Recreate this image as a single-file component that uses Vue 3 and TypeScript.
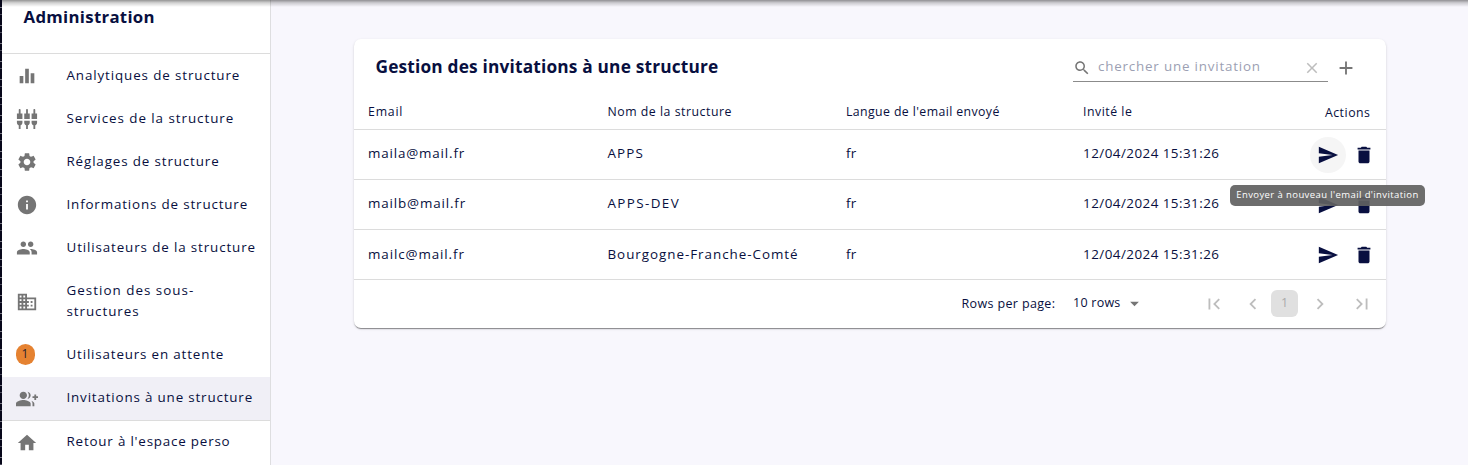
<script setup lang="ts">
interface Label { text: string; spacing: number }
interface MenuItem { icon: string; lines: Label[]; active?: boolean; badge?: number; divided?: boolean }
interface Row { email: Label; structure: Label; lang: string; date: string; hovered?: boolean }

const icons: Record<string, string> = {
  chart: 'M10 20h4V4h-4v16zm-6 0h4v-8H4v8zM16 9v11h4V9h-4z',
  services: 'M5 2c0-.55-.45-1-1-1s-1 .45-1 1v4H1v6h6V6H5V2zm4 14c0 1.3.84 2.4 2 2.82V23h2v-4.18c1.16-.41 2-1.51 2-2.82v-2H9v2zm-8 0c0 1.3.84 2.4 2 2.82V23h2v-4.18C6.16 18.4 7 17.3 7 16v-2H1v2zM21 6V2c0-.55-.45-1-1-1s-1 .45-1 1v4h-2v6h6V6h-2zm-8-4c0-.55-.45-1-1-1s-1 .45-1 1v4H9v6h6V6h-2V2zm4 14c0 1.3.84 2.4 2 2.82V23h2v-4.18c1.16-.41 2-1.51 2-2.82v-2h-6v2z',
  settings: 'M19.14 12.94c.04-.3.06-.61.06-.94 0-.32-.02-.64-.07-.94l2.03-1.58c.18-.14.23-.41.12-.61l-1.92-3.32c-.12-.22-.37-.29-.59-.22l-2.39.96c-.5-.38-1.03-.7-1.62-.94l-.36-2.54c-.04-.24-.24-.41-.48-.41h-3.84c-.24 0-.43.17-.47.41l-.36 2.54c-.59.24-1.13.57-1.62.94l-2.39-.96c-.22-.08-.47 0-.59.22L2.74 8.87c-.12.21-.08.47.12.61l2.03 1.58c-.05.3-.09.63-.09.94s.02.64.07.94l-2.03 1.58c-.18.14-.23.41-.12.61l1.92 3.32c.12.22.37.29.59.22l2.39-.96c.5.38 1.03.7 1.62.94l.36 2.54c.05.24.24.41.48.41h3.84c.24 0 .44-.17.47-.41l.36-2.54c.59-.24 1.13-.56 1.62-.94l2.39.96c.22.08.47 0 .59-.22l1.92-3.32c.12-.22.07-.47-.12-.61l-2.01-1.58zM12 15.6c-1.98 0-3.6-1.62-3.6-3.6s1.62-3.6 3.6-3.6 3.6 1.62 3.6 3.6-1.62 3.6-3.6 3.6z',
  info: 'M12 2C6.48 2 2 6.48 2 12s4.48 10 10 10 10-4.48 10-10S17.52 2 12 2zm1 15h-2v-6h2v6zm0-8h-2V7h2v2z',
  people: 'M16 11c1.66 0 2.99-1.34 2.99-3S17.66 5 16 5c-1.66 0-3 1.34-3 3s1.34 3 3 3zm-8 0c1.66 0 2.99-1.34 2.99-3S9.66 5 8 5C6.34 5 5 6.34 5 8s1.34 3 3 3zm0 2c-2.33 0-7 1.17-7 3.5V19h14v-2.5c0-2.33-4.67-3.5-7-3.5zm8 0c-.29 0-.62.02-.97.05 1.16.84 1.97 1.97 1.97 3.45V19h6v-2.5c0-2.33-4.67-3.5-7-3.5z',
  business: 'M12 7V3H2v18h20V7H12zM6 19H4v-2h2v2zm0-4H4v-2h2v2zm0-4H4V9h2v2zm0-4H4V5h2v2zm4 12H8v-2h2v2zm0-4H8v-2h2v2zm0-4H8V9h2v2zm0-4H8V5h2v2zm10 12h-8v-2h2v-2h-2v-2h2v-2h-2V9h8v10zm-2-8h-2v2h2v-2zm0 4h-2v2h2v-2z',
  groupAdd: 'M22 9V7h-2v2h-2v2h2v2h2v-2h2V9zM8 12c2.21 0 4-1.79 4-4s-1.79-4-4-4-4 1.79-4 4 1.79 4 4 4zm0 1c-2.67 0-8 1.34-8 4v3h16v-3c0-2.66-5.33-4-8-4zM12.51 4.05C13.43 5.11 14 6.49 14 8s-.57 2.89-1.49 3.95C14.47 11.7 16 10.04 16 8s-1.53-3.7-3.49-3.95zM16.53 13.83C17.42 14.66 18 15.7 18 17v3h2v-3c0-1.45-1.59-2.51-3.47-3.17z',
  home: 'M10 20v-6h4v6h5v-8h3L12 3 2 12h3v8z',
  search: 'M15.5 14h-.79l-.28-.27C15.41 12.59 16 11.11 16 9.5 16 5.91 13.09 3 9.5 3S3 5.91 3 9.5 5.91 16 9.5 16c1.61 0 3.09-.59 4.23-1.57l.27.28v.79l5 4.99L20.49 19l-4.99-5zm-6 0C7.01 14 5 11.99 5 9.5S7.01 5 9.5 5 14 7.01 14 9.5 11.99 14 9.5 14z',
  clear: 'M19 6.41L17.59 5 12 10.59 6.41 5 5 6.41 10.59 12 5 17.59 6.41 19 12 13.41 17.59 19 19 17.59 13.41 12z',
  add: 'M19 13h-6v6h-2v-6H5v-2h6V5h2v6h6v2z',
  send: 'M2.01 21L23 12 2.01 3 2 10l15 2-15 2z',
  trash: 'M6 19c0 1.1.9 2 2 2h8c1.1 0 2-.9 2-2V7H6v12zM19 4h-3.5l-1-1h-5l-1 1H5v2h14V4z',
  drop: 'M7 10l5 5 5-5z',
  first: 'M18.41 16.59L13.82 12l4.59-4.59L17 6l-6 6 6 6zM6 6h2v12H6z',
  prev: 'M15.41 7.41L14 6l-6 6 6 6 1.41-1.41L10.83 12z',
  next: 'M10 6L8.59 7.41 13.17 12l-4.58 4.59L10 18l6-6z',
  last: 'M5.59 7.41L10.18 12l-4.59 4.59L7 18l6-6-6-6zM16 6h2v12h-2z',
}

const menu: MenuItem[] = [
  { icon: 'chart', lines: [{ text: 'Analytiques de structure', spacing: 0.88 }] },
  { icon: 'services', lines: [{ text: 'Services de la structure', spacing: 0.95 }] },
  { icon: 'settings', lines: [{ text: 'Réglages de structure', spacing: 0.86 }] },
  { icon: 'info', lines: [{ text: 'Informations de structure', spacing: 0.84 }] },
  { icon: 'people', lines: [{ text: 'Utilisateurs de la structure', spacing: 0.87 }] },
  { icon: 'business', lines: [{ text: 'Gestion des sous-', spacing: 1.02 }, { text: 'structures', spacing: 0.94 }] },
  { icon: '', badge: 1, lines: [{ text: 'Utilisateurs en attente', spacing: 0.83 }] },
  { icon: 'groupAdd', active: true, lines: [{ text: 'Invitations à une structure', spacing: 0.83 }] },
  { icon: 'home', divided: true, lines: [{ text: "Retour à l'espace perso", spacing: 0.8 }] },
]

const rows: Row[] = [
  { email: { text: 'maila@mail.fr', spacing: 0.84 }, structure: { text: 'APPS', spacing: 1.1 }, lang: 'fr', date: '12/04/2024 15:31:26', hovered: true },
  { email: { text: 'mailb@mail.fr', spacing: 0.86 }, structure: { text: 'APPS-DEV', spacing: 1.4 }, lang: 'fr', date: '12/04/2024 15:31:26' },
  { email: { text: 'mailc@mail.fr', spacing: 0.9 }, structure: { text: 'Bourgogne-Franche-Comté', spacing: 0.97 }, lang: 'fr', date: '12/04/2024 15:31:26' },
]
</script>

<template>
  <div class="page">
    <div class="edge"></div>
    <aside class="sidebar">
      <h2><span>Administration</span></h2>
      <nav>
        <a v-for="item in menu" :key="item.lines[0].text" class="item" :class="{ active: item.active, divided: item.divided, tall: item.lines.length > 1 }">
          <span class="slot">
            <span v-if="item.badge" class="badge">{{ item.badge }}</span>
            <svg v-else class="icon" viewBox="0 0 24 24"><path :d="icons[item.icon]" /></svg>
          </span>
          <span class="label">
            <span v-for="l in item.lines" :key="l.text" class="line" :style="{ letterSpacing: l.spacing + 'px' }">{{ l.text }}</span>
          </span>
        </a>
      </nav>
    </aside>
    <main>
      <section class="card">
        <header>
          <h1>Gestion des invitations à une structure</h1>
          <div class="search">
            <svg class="s18" viewBox="0 0 24 24"><path :d="icons.search" /></svg>
            <span class="placeholder">chercher une invitation</span>
            <svg class="s18 pale" viewBox="0 0 24 24"><path :d="icons.clear" /></svg>
          </div>
          <svg class="plus" viewBox="0 0 24 24"><path :d="icons.add" /></svg>
        </header>
        <div class="row head">
          <span class="h-email">Email</span>
          <span>Nom de la structure</span>
          <span class="h-lang">Langue de l'email envoyé</span>
          <span>Invité le</span>
          <span class="h-actions">Actions</span>
        </div>
        <div v-for="r in rows" :key="r.email.text" class="row body">
          <span class="cell" :style="{ letterSpacing: r.email.spacing + 'px' }">{{ r.email.text }}</span>
          <span class="cell" :style="{ letterSpacing: r.structure.spacing + 'px' }">{{ r.structure.text }}</span>
          <span class="cell">{{ r.lang }}</span>
          <span class="cell date">{{ r.date }}</span>
          <span class="actions">
            <span class="action" :class="{ hovered: r.hovered }">
              <svg viewBox="0 0 24 24"><path :d="icons.send" /></svg>
              <span v-if="r.hovered" class="tooltip">Envoyer à nouveau l'email d'invitation</span>
            </span>
            <span class="action"><svg viewBox="0 0 24 24"><path :d="icons.trash" /></svg></span>
          </span>
        </div>
        <footer>
          <span class="per-page">Rows per page:</span>
          <span class="count">10 rows</span>
          <svg class="drop" viewBox="0 0 24 24"><path :d="icons.drop" /></svg>
          <span class="pager">
            <svg viewBox="0 0 24 24"><path :d="icons.first" /></svg>
            <svg class="prev" viewBox="0 0 24 24"><path :d="icons.prev" /></svg>
            <span class="current">1</span>
            <svg class="next" viewBox="0 0 24 24"><path :d="icons.next" /></svg>
            <svg class="last" viewBox="0 0 24 24"><path :d="icons.last" /></svg>
          </span>
        </footer>
      </section>
    </main>
    <div class="top-shadow"></div>
  </div>
</template>

<style>
body { margin: 0; overflow: hidden; }
</style>

<style scoped>
* { box-sizing: border-box; }
.page { position: relative; display: flex; width: 1468px; height: 465px; overflow: hidden; background: #f8f7fd; color: #080f40; font: 13.4px/21px "Open Sans", sans-serif; white-space: nowrap; }
.edge { width: 2px; background: repeating-linear-gradient(#07071a 0 7px, #777783 7px 8px, #07071a 8px 14px, #4c4c5c 14px 15px, #07071a 15px 18px); }
.top-shadow { position: absolute; left: 2px; right: 0; top: 0; height: 7px; background: linear-gradient(rgba(0,0,0,.42), rgba(0,0,0,.18) 40%, rgba(0,0,0,0)); }
svg { display: block; fill: currentColor; flex: none; }
.sidebar { width: 269px; background: #fff; border-right: 1px solid #dedee0; }
h2 { margin: 0; height: 54px; padding: 6px 0 0 21.5px; border-bottom: 1px solid #dcdcdc; font-size: 16.8px; line-height: 22px; letter-spacing: .3px; }
.item { display: flex; align-items: center; height: 43px; padding-left: 13.5px; }
.item.tall { height: 64px; }
.tall .slot { padding-top: 1px; }
.item.active { margin-top: 1px; background: #f0eff6; }
.item.divided { border-top: 1px solid #dcdcdc; height: 44px; }
.active .label, .divided .label { padding-bottom: 2px; }
.slot { width: 51px; color: #757575; }
.icon { width: 22px; height: 22px; }
.badge { display: block; width: 19px; height: 21px; border-radius: 10px; background: #e58231; color: #27242e; font-size: 12px; line-height: 19px; text-align: center; }
.line { display: block; }
main { flex: 1; padding: 39px 82px 0 83px; }
.card { width: 1032px; height: 288.5px; border-radius: 7px; background: #fff; box-shadow: 0 2px 1px -1px rgba(0,0,0,.3), 0 1px 1px rgba(0,0,0,.14), 0 1px 3px rgba(0,0,0,.12); }
header { display: flex; height: 56px; padding-left: 21.5px; }
h1 { margin: 0; width: 697.5px; font-size: 17.3px; line-height: 56px; letter-spacing: .18px; }
.search { display: flex; align-items: center; width: 255px; height: 27px; margin-top: 16px; border-bottom: 1px solid #8b8b8b; }
.s18 { width: 18px; height: 18px; color: #757575; }
.pale { color: #bdbdbd; }
.placeholder { width: 212px; padding: 0 0 4px 7px; color: #9c9fb3; letter-spacing: .8px; }
.plus { width: 22px; height: 22px; margin: 18px 0 0 6.5px; color: #757575; }
.row { display: grid; grid-template-columns: 239.5px 238.5px 237px 220px 1fr; align-items: center; padding-left: 14px; border-bottom: 1px solid #dcdcdc; }
.head { height: 35px; font-size: 12.3px; letter-spacing: .52px; }
.head span { padding-bottom: 2px; }
.head .h-email { letter-spacing: .8px; }
.head .h-lang { letter-spacing: .4px; }
.head .h-actions { padding: 0 15.5px 0 0; text-align: right; }
.body { height: 50px; }
.cell { padding-bottom: 2px; letter-spacing: .3px; }
.body:nth-last-child(2) .cell { padding-bottom: 0; }
.cell.date { letter-spacing: .47px; }
.actions { display: flex; padding-left: 6.5px; }
.action { position: relative; display: grid; place-items: center; width: 36px; height: 36px; border-radius: 50%; }
.action svg { width: 22px; height: 22px; }
.hovered { background: #f5f5f5; }
.tooltip { position: absolute; z-index: 2; left: -79.5px; top: 48.5px; width: 195px; height: 21px; border-radius: 5px; background: rgba(97,97,97,.92); color: #fff; font-size: 9.5px; line-height: 19px; letter-spacing: .4px; text-align: center; }
footer { display: flex; align-items: center; height: 47px; padding-left: 607.5px; font-size: 12.5px; }
.per-page { width: 111.5px; letter-spacing: .36px; }
.count { width: 51px; padding-bottom: 3px; letter-spacing: .25px; }
.drop { width: 21px; height: 21px; color: #757575; }
.pager { display: flex; align-items: center; margin-left: 57.5px; color: #bdbdbd; }
.pager svg { width: 22px; height: 22px; }
.pager .prev { margin-left: 17px; }
.current { width: 27px; height: 27px; margin-left: 7.5px; border-radius: 6px; background: #e0e0e0; line-height: 25px; text-align: center; color: #aaa; }
.pager .next { margin-left: 11px; }
.pager .last { margin-left: 20px; }
</style>
